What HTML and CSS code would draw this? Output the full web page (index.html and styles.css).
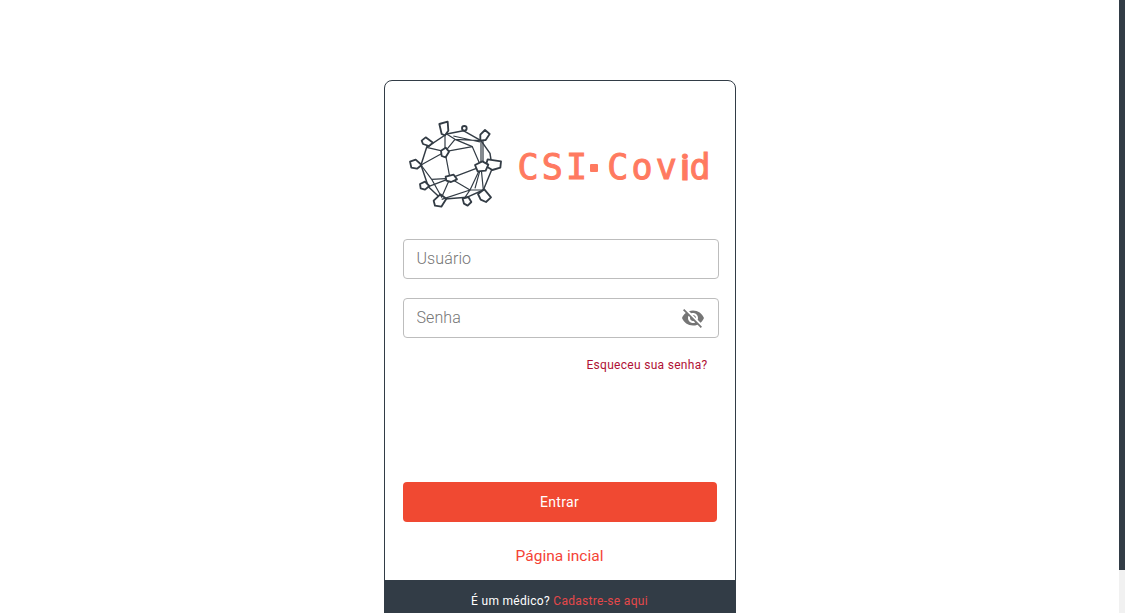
FILE: index.html
```html
<!DOCTYPE html>
<html lang="pt-BR">
<head>
<meta charset="utf-8">
<title>CSI-Covid</title>
<link rel="stylesheet" href="styles.css">
</head>
<body>
<main class="page">
  <section class="card">
    <div class="logo">
      <svg class="virus" viewBox="0 0 360 330" width="120" height="110" fill="none" stroke="#333c45" stroke-width="3.6" stroke-linejoin="round" aria-hidden="true">
        <path d="M155 72 L205 62 L258 92 L285 130 L292 175 L265 240 L215 262 L140 268 L100 230 L78 165 L95 112Z" stroke-width="4.4"/>
        <path d="M150 72 L146 55 M258 92 L268 78 M95 112 L98 100 M78 165 L62 163 M292 170 L305 165 M100 230 L88 228 M140 268 L132 272 M215 262 L215 272 M265 240 L268 258 M205 62 L208 55"/>
        <g fill="#fff" stroke-width="5.5">
          <path d="M133 42 L158 35 L160 62 L150 76 L140 72Z"/>
          <circle cx="208" cy="55" r="7"/>
          <path d="M256 74 L270 60 L284 72 L272 90 L256 92Z"/>
          <path d="M80 92 L92 82 L114 98 L102 108 L84 102Z"/>
          <path d="M45 155 L62 149 L80 165 L66 176 L49 173Z"/>
          <path d="M278 148 L318 154 L316 173 L292 180 L272 168Z"/>
          <path d="M75 222 L90 215 L103 228 L90 239 L77 235Z"/>
          <path d="M116 272 L136 253 L154 266 L139 290 L120 287Z"/>
          <path d="M203 266 L220 261 L229 276 L218 287 L207 281Z"/>
          <path d="M249 252 L268 238 L288 262 L273 276 L257 269Z"/>
        </g>
        <path d="M150 75 L150 125 M155 72 L180 88 L232 110 L258 170 M180 88 L258 92 M175 78 L255 96 M258 92 L258 170 M264 92 L264 156"/>
        <path d="M150 125 L232 110 M150 125 L95 112 M150 125 L78 165 M150 125 L165 205 M150 125 L180 88"/>
        <path d="M78 165 L110 208 L165 205 L100 230 M110 208 L140 262 L165 205 L225 240 L258 170 L165 205"/>
        <path d="M140 268 L225 240 L265 240 L258 170 M225 240 L210 262 M258 170 L240 235"/>
        <g fill="#fff" stroke-width="5.5">
          <path d="M138 122 L152 113 L162 125 L152 142 L140 138Z"/>
          <path d="M240 165 L262 154 L280 164 L272 182 L248 184Z"/>
          <path d="M152 200 L176 194 L186 208 L168 216 L154 212Z"/>
        </g>
      </svg>
      <span class="brand">CSI<span class="brand-dot"></span>Cov<span class="brand-i">i</span>d</span>
    </div>
    <form class="form">
      <div class="field"><input class="input" type="text" placeholder="Usuário"></div>
      <div class="field">
        <input class="input" type="password" placeholder="Senha">
        <svg class="eye" viewBox="0 0 24 24" width="24" height="24" fill="#757575" aria-hidden="true">
          <path d="M12 7c2.76 0 5 2.24 5 5 0 .65-.13 1.26-.36 1.83l2.92 2.92c1.51-1.26 2.7-2.89 3.43-4.75-1.73-4.39-6-7.5-11-7.5-1.4 0-2.74.25-3.98.7l2.16 2.16C10.74 7.13 11.35 7 12 7zM2 4.27l2.28 2.28.46.46C3.08 8.3 1.78 10.02 1 12c1.73 4.39 6 7.5 11 7.5 1.55 0 3.03-.3 4.38-.84l.42.42L19.73 22 21 20.73 3.27 3 2 4.27zM7.53 9.8l1.55 1.55c-.05.21-.08.43-.08.65 0 1.66 1.34 3 3 3 .22 0 .44-.03.65-.08l1.55 1.55c-.67.33-1.41.53-2.2.53-2.76 0-5-2.24-5-5 0-.79.2-1.53.53-2.2zm4.31-.78l3.15 3.15.02-.16c0-1.66-1.34-3-3-3l-.17.01z"/>
        </svg>
      </div>
      <a class="forgot" href="#">Esqueceu sua senha?</a>
      <button class="submit" type="button">Entrar</button>
      <a class="home" href="#">Página incial</a>
    </form>
    <footer class="footer">É um médico? <a class="signup" href="#">Cadastre-se aqui</a></footer>
  </section>
</main>
<div class="scrollbar" aria-hidden="true"><div class="scrollbar-thumb"></div></div>
</body>
</html>
```
FILE: styles.css
```css
html { scrollbar-width: none; }
html::-webkit-scrollbar { display: none; }
body {
  margin: 0;
  background: #fff;
  font-family: Roboto, "Liberation Sans", sans-serif;
}
.page {
  display: flex;
  justify-content: center;
  padding: 80px 6px 33px 0;
}
.scrollbar {
  position: fixed;
  top: 0;
  right: 0;
  bottom: 0;
  width: 6px;
  background: #f1f1f1;
}
.scrollbar-thumb {
  height: 570px;
  background: #323c46;
}
.card {
  width: 350px;
  border: 1px solid #323c46;
  border-radius: 8px;
  overflow: hidden;
  background: #fff;
}
.logo {
  display: flex;
  align-items: center;
  height: 110px;
  margin-top: 29px;
  padding-left: 10px;
}
.virus { flex: none; }
.brand {
  display: flex;
  align-items: center;
  margin: 4px 0 0 3px;
  font-family: "DejaVu Sans Mono", monospace;
  font-size: 35px;
  font-weight: 400;
  line-height: 1;
  letter-spacing: 3.2px;
  color: #ff7a60;
  -webkit-text-stroke: 1px #ff7a60;
}
.brand-dot {
  width: 8px;
  height: 8px;
  margin: 2px 9px 0 0;
  border-radius: 1px;
  background: #ff7a60;
}
.brand-i {
  font-family: Roboto, sans-serif;
  font-weight: 500;
  font-size: 37px;
  letter-spacing: 0;
  margin-left: 0;
}
.form {
  display: flex;
  flex-direction: column;
  padding: 19px 16px 0 18px;
}
.field {
  position: relative;
  margin-bottom: 19px;
}
.input {
  display: block;
  box-sizing: border-box;
  width: 100%;
  height: 40px;
  padding: 0 13px 2px;
  border: 1px solid #bdbdbd;
  border-radius: 4px;
  background: #fff;
  font-family: Roboto, sans-serif;
  font-size: 16px;
  font-weight: 300;
  letter-spacing: 0.1px;
  color: #333;
  outline: none;
}
.input::placeholder { color: #757575; opacity: 1; }
.eye {
  position: absolute;
  top: 8px;
  right: 14px;
}
.forgot {
  align-self: flex-end;
  margin: 0 11px 0 0;
  font-size: 12px;
  line-height: 16px;
  letter-spacing: 0.3px;
  color: #b01235;
  text-decoration: none;
}
.submit {
  height: 40px;
  width: 314px;
  margin-top: 109px;
  padding: 0;
  border: 0;
  border-radius: 4px;
  background: #f04932;
  color: #fff;
  font-family: Roboto, sans-serif;
  font-size: 14px;
  letter-spacing: 0.3px;
}
.home {
  align-self: center;
  margin: 24px 0 14px -2px;
  font-size: 15.5px;
  line-height: 20px;
  color: #f44336;
  text-decoration: none;
}
.footer {
  padding: 12px 0 16px;
  background: #323c46;
  color: #fff;
  font-size: 12px;
  line-height: 18px;
  letter-spacing: 0.3px;
  text-align: center;
}
.signup {
  color: #e5484a;
  text-decoration: none;
}
```
